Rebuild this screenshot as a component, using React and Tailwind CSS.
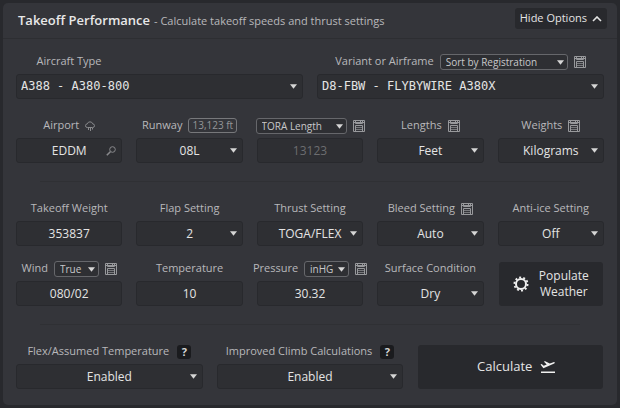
const FIELD =
  "block h-[25px] w-full min-w-0 appearance-none rounded-[3px] border border-[#28292d] bg-[#2e2f33] text-[12px] leading-[23px] font-medium outline-none";

function Arrow({ className }) {
  return (
    <svg viewBox="0 0 8 5" className={`pointer-events-none absolute h-[5px] w-[7px] ${className}`} fill="#d6d6d6" aria-hidden="true">
      <path d="M0 0h8L4 5z" />
    </svg>
  );
}

function Floppy() {
  return (
    <svg viewBox="0 0 12 12" className="size-3 shrink-0" fill="none" stroke="#98999c" aria-hidden="true">
      <path d="M.5 .5h11v11h-11z" />
      <path d="M.5 2.500h11M2.500 .5v3h7v-3M7.500 .5v2M2.500 11.500v-6h7v6" />
      <path d="M3 7.500h6M3 9.500h6" stroke="#77787b" />
    </svg>
  );
}

function Cloud() {
  return (
    <svg viewBox="0 0 10 10" className="size-[10px] shrink-0" fill="none" stroke="#88898c" aria-hidden="true">
      <path d="M2.300 6.500a1.800 1.800 0 0 1 0-3.600 2.800 2.800 0 0 1 5.400 0 1.800 1.800 0 0 1 0 3.600zM3.500 7v2M5.500 7v3M7.500 7v1.500" />
    </svg>
  );
}

function Field({ id, label, extra, className = "", children }) {
  return (
    <div className="flex min-w-0 flex-col gap-[2px]">
      <div className={`flex h-[21px] items-center justify-center gap-[6px] whitespace-nowrap ${className}`}>
        {label && (
          <label htmlFor={id} className="text-[11px] text-[#b8b8ba]">
            {label}
          </label>
        )}
        {extra}
      </div>
      {children}
    </div>
  );
}

function Select({ id, value, mono = false }) {
  return (
    <div className="relative">
      <select
        id={id}
        className={`${FIELD} text-[#e4e4e4] ${mono ? "pr-5 pl-1 font-['DejaVu_Sans_Mono',monospace]" : "[text-align-last:center]"}`}
      >
        <option>{value}</option>
      </select>
      <Arrow className="top-[10px] right-[6px]" />
    </div>
  );
}

function Mini({ label, value, width }) {
  return (
    <div className="relative">
      <select
        aria-label={label}
        className={`block h-4 appearance-none rounded-[3px] border border-[#66676b] bg-[#2e2f33] pl-[5px] text-[10px] leading-[14px] text-[#c8c8ca] outline-none ${width}`}
      >
        <option>{value}</option>
      </select>
      <Arrow className="top-[6px] right-1" />
    </div>
  );
}

function Input({ id, value }) {
  return <input id={id} defaultValue={value} className={`${FIELD} text-center text-[#e4e4e4]`} />;
}

function Help() {
  return (
    <button aria-label="Help" className="ml-0.5 h-[14px] w-[14px] rounded-[3px] bg-[#1a1b1e] text-[11px] leading-[14px] font-bold text-[#d6d6d6]">
      ?
    </button>
  );
}

function Divider() {
  return <hr className="mx-6 mt-[18px] mb-4 border-[#2f3034]" />;
}

const ROW = "grid grid-cols-5 gap-[14px]";

export default function App() {
  return (
    <div className="min-h-screen bg-[#28292d] p-[3px] font-['Open_Sans',sans-serif]">
      <section className="rounded-[5px] bg-[#34353a]">
        <header className="flex h-9 items-center justify-between border-b border-[#2d2e32] pr-[10px] pl-[15px] whitespace-nowrap">
          <div className="flex items-baseline gap-1">
            <h1 className="text-[13px] font-semibold text-[#e8e8e8]">Takeoff Performance</h1>
            <p className="text-[11px] text-[#b8b8ba]">- Calculate takeoff speeds and thrust settings</p>
          </div>
          <button className="mb-1 flex h-[21px] items-center gap-[5px] rounded-[3px] bg-[#28292d] px-[5px] text-[11px] font-medium text-[#e4e4e4]">
            Hide Options
            <svg viewBox="0 0 10 6" className="h-[6px] w-[10px]" fill="none" stroke="currentColor" strokeWidth="1.600" aria-hidden="true">
              <path d="M1 5l4-4 4 4" />
            </svg>
          </button>
        </header>

        <div className="px-[13px] pt-3 pb-4">
          <div className="grid grid-cols-2 gap-[14px]">
            <Field id="type" label="Aircraft Type" className="w-[106px]">
              <Select id="type" value="A388 - A380-800" mono />
            </Field>
            <Field
              id="variant"
              label="Variant or Airframe"
              extra={<><Mini label="Sort airframes" value="Sort by Registration" width="w-32" /><Floppy /></>}
            >
              <Select id="variant" value="D8-FBW - FLYBYWIRE A380X" mono />
            </Field>
          </div>

          <div className={`mt-4 ${ROW}`}>
            <Field id="airport" label="Airport" extra={<Cloud />}>
              <div className="relative">
                <Input id="airport" value="EDDM" />
                <svg viewBox="0 0 10 10" className="pointer-events-none absolute top-2 right-[6px] size-[10px]" fill="none" stroke="#88898c" aria-hidden="true">
                  <circle cx="6.500" cy="3.500" r="2.800" />
                  <path d="M4.300 5.700L.8 9.200" strokeWidth="1.600" />
                </svg>
              </div>
            </Field>
            <Field
              id="runway"
              label="Runway"
              extra={<span className="h-[15px] rounded-[3px] border border-[#77787b] px-[3px] text-[10px] leading-[13px] text-[#949598]">13,123 ft</span>}
            >
              <Select id="runway" value="08L" />
            </Field>
            <Field extra={<><Mini label="Length type" value="TORA Length" width="w-[91px]" /><Floppy /></>}>
              <input
                aria-label="TORA Length value"
                disabled
                defaultValue="13123"
                className={`${FIELD} text-center text-[#6c6d70]`}
              />
            </Field>
            <Field id="lengths" label="Lengths" extra={<Floppy />}>
              <Select id="lengths" value="Feet" />
            </Field>
            <Field id="weights" label="Weights" extra={<Floppy />}>
              <Select id="weights" value="Kilograms" />
            </Field>
          </div>

          <Divider />

          <div className={ROW}>
            <Field id="tow" label="Takeoff Weight">
              <Input id="tow" value="353837" />
            </Field>
            <Field id="flaps" label="Flap Setting">
              <Select id="flaps" value="2" />
            </Field>
            <Field id="thrust" label="Thrust Setting">
              <Select id="thrust" value="TOGA/FLEX" />
            </Field>
            <Field id="bleed" label="Bleed Setting" extra={<Floppy />}>
              <Select id="bleed" value="Auto" />
            </Field>
            <Field id="ice" label="Anti-ice Setting">
              <Select id="ice" value="Off" />
            </Field>
          </div>

          <div className={`mt-3 ${ROW}`}>
            <Field id="wind" label="Wind" extra={<><Mini label="Wind reference" value="True" width="w-[45px]" /><Floppy /></>}>
              <Input id="wind" value="080/02" />
            </Field>
            <Field id="temp" label="Temperature">
              <Input id="temp" value="10" />
            </Field>
            <Field id="pressure" label="Pressure" extra={<><Mini label="Pressure unit" value="inHG" width="w-[45px]" /><Floppy /></>}>
              <Input id="pressure" value="30.32" />
            </Field>
            <Field id="surface" label="Surface Condition">
              <Select id="surface" value="Dry" />
            </Field>
            <button className="mx-px mt-1 flex items-center justify-center gap-[10px] rounded-[3px] bg-[#28292d] text-[12px] leading-4 font-medium text-[#e4e4e4]">
              <svg viewBox="0 0 16 16" className="size-4" fill="none" stroke="#f0f0f0" aria-hidden="true">
                <circle cx="8" cy="8" r="5" strokeWidth="2" />
                <circle cx="8" cy="8" r="6.600" strokeWidth="1.800" strokeDasharray="2 2.147" />
              </svg>
              <span className="flex flex-col">
                <span>Populate</span>
                <span>Weather</span>
              </span>
            </button>
          </div>

          <Divider />

          <div className="grid grid-cols-3 gap-[14px]">
            <Field id="flex" label="Flex/Assumed Temperature" extra={<Help />}>
              <Select id="flex" value="Enabled" />
            </Field>
            <Field id="climb" label="Improved Climb Calculations" extra={<Help />}>
              <Select id="climb" value="Enabled" />
            </Field>
            <button className="mx-px mt-1 flex items-center justify-center gap-2 rounded-[3px] bg-[#28292d] pl-3 text-[13px] font-medium text-[#e4e4e4]">
              Calculate
              <svg viewBox="0 0 16 14" className="h-[14px] w-4" fill="#f0f0f0" aria-hidden="true">
                <path d="M1 11.500h14V13H1zM.5 4.500l1.200-.4 2 1.600 3-1.100L3.800 1.600l1.400-.4 4.600 2.300 3.700-1.300c1.200-.4 1.900.9.700 1.400L3.400 8.300z" />
              </svg>
            </button>
          </div>
        </div>
      </section>
    </div>
  );
}
